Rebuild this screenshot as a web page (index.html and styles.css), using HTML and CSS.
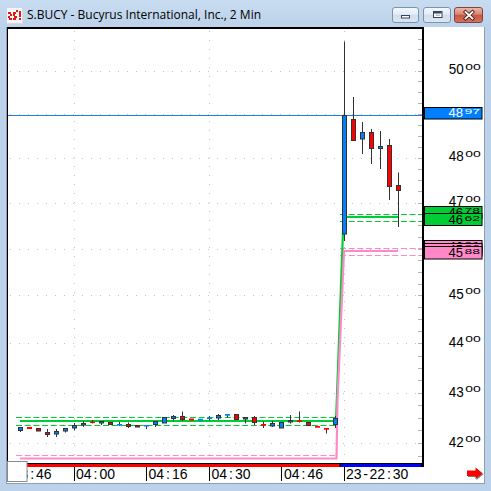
FILE: index.html
```html
<!DOCTYPE html>
<html lang="en">
<head>
<meta charset="utf-8">
<title>S.BUCY - Bucyrus International, Inc., 2 Min</title>
<link rel="stylesheet" href="styles.css">
</head>
<body>
<div class="window">
  <header class="titlebar">
    <svg class="app-icon" width="16" height="16" viewBox="0 0 16 16">
      <rect width="16" height="16" fill="#d9d9d9"/>
      <rect x="0" y="0" width="15" height="15" fill="#f7f7f7"/>
      <g fill="#e01818">
        <rect x="1" y="4" width="3" height="2"/><rect x="3" y="6" width="2" height="2"/><rect x="1" y="8" width="2" height="2"/><rect x="2" y="10" width="3" height="2"/>
        <rect x="6" y="4" width="3" height="2"/><rect x="6" y="6" width="2" height="2"/><rect x="7" y="8" width="3" height="2"/><rect x="6" y="10" width="3" height="2"/><rect x="9" y="2" width="2" height="2"/>
        <rect x="12" y="3" width="2" height="6"/><rect x="12" y="10" width="2" height="2"/>
      </g>
    </svg>
    <span class="title">S.BUCY - Bucyrus International, Inc., 2 Min</span>
    <div class="controls">
      <div class="btn btn-min"><svg width="25" height="14" viewBox="0 0 25 14"><rect x="8.5" y="7.5" width="8" height="2.5" fill="#fff" stroke="#34455a"/></svg></div>
      <div class="btn btn-max"><svg width="26" height="14" viewBox="0 0 26 14"><rect x="9.5" y="3.5" width="8.5" height="6" fill="#fff" stroke="#34455a"/><rect x="10" y="4" width="7.5" height="1.5" fill="#34455a"/><rect x="11.5" y="6.5" width="4.5" height="1.5" fill="#34455a" opacity="0.35"/></svg></div>
      <div class="btn btn-close"><svg width="27" height="14" viewBox="0 0 27 14"><path d="M10.5 4 L17.5 10.5 M17.5 4 L10.5 10.5" stroke="#4d1c16" stroke-width="3.6" stroke-linecap="square"/><path d="M10.5 4 L17.5 10.5 M17.5 4 L10.5 10.5" stroke="#fff" stroke-width="1.8" stroke-linecap="square"/></svg></div>
    </div>
  </header>

  <div class="panel">
    <svg class="plot" width="417" height="456" viewBox="7 27 417 456">
      <!-- grid -->
      <path class="grid" d="M10 71.5H422M10 114.5H422M10 158.5H422M10 203.5H422M10 249.5H422M10 295.5H422M10 343.5H422M10 393.5H422M10 443.5H422"/>
      <path class="grid" d="M74.5 31V463M209.5 31V463M344.5 31V463"/>
      <!-- minor ticks -->
      <path class="ticks" d="M418 39.5h4M418 49.5h4M418 60.5h4M418 71.5h4M418 81.5h4M418 92.5h4M418 103.5h4M418 114.5h4M418 125.5h4M418 136.5h4M418 147.5h4M418 158.5h4M418 169.5h4M418 180.5h4M418 191.5h4M418 203.5h4M418 214.5h4M418 225.5h4M418 237.5h4M418 249.5h4M418 260.5h4M418 272.5h4M418 284.5h4M418 295.5h4M418 307.5h4M418 319.5h4M418 331.5h4M418 343.5h4M418 356.5h4M418 368.5h4M418 380.5h4M418 393.5h4M418 405.5h4M418 418.5h4M418 430.5h4M418 443.5h4M418 456.5h4"/>

      <!-- last price line -->
      <line class="pline" x1="8" y1="115.5" x2="422" y2="115.5"/>

      <!-- green / pink levels -->
      <path class="gdash" d="M16 417.5H338M16 425.5H338M340 214.5H422M340 221.5H422"/>
      <path class="pdash" d="M16 455.5H338M340 248.5H422M340 255.5H422"/>
      <polyline class="gline" points="20,421 336,421 337,395 343.5,217 398,217"/>
      <polyline class="pnline" points="20,458.5 336.5,458.5 337.5,400 344,251 398,251"/>

      <!-- wicks -->
      <path class="wick" d="M20.5 427V432M47.5 429V437M56.5 429V437M65.5 428V432.5M74.5 423V430.5M83.5 421V427M92.5 420V423.5M101.5 421V425M119.5 422V426M128.5 422.5V428M146.5 425V429M155.5 421V427M173.5 415V420.5M182.5 411.5V421M209.5 416V420.5M218.5 414V420M227.5 414V417.5M245.5 417V423.5M254.5 416V425M263.5 421.5V428M272.5 421V427M290.5 415V423.5M299.5 411.5V422.5M326.5 428V433.5M335.5 416V428M344.5 41.5V241M353.5 97V141M362.5 122V154M371.5 129V164M380.5 131V169M389.5 139V200M398.5 172.5V227"/>

      <!-- flat candles (no outline) -->
      <g class="flat-r">
        <rect x="27" y="427" width="5" height="2"/>
        <rect x="90" y="421.5" width="5" height="1.5"/>
        <rect x="189" y="418.5" width="5" height="2"/>
        <rect x="261" y="424" width="5" height="1.7"/>
        <rect x="297" y="420.3" width="5" height="1.7"/>
        <rect x="315" y="426" width="5" height="1.7"/>
        <rect x="324" y="428" width="5" height="1.7"/>
      </g>
      <g class="flat-b">
        <rect x="117" y="424" width="5" height="1.5"/>
        <rect x="144" y="425" width="5" height="1.5"/>
        <rect x="198" y="418.7" width="5" height="2"/>
        <rect x="207" y="417.5" width="5" height="1.5"/>
        <rect x="225" y="414" width="5" height="1.7"/>
      </g>

      <!-- bodies -->
      <g class="up">
        <rect x="18.5" y="427.5" width="4" height="3"/>
        <rect x="54.5" y="431.5" width="4" height="2.5"/>
        <rect x="63.5" y="428.5" width="4" height="2.5"/>
        <rect x="72.5" y="425.5" width="4" height="2.5"/>
        <rect x="81.5" y="423.5" width="4" height="1.5"/>
        <rect x="99.5" y="421.5" width="4" height="1.5"/>
        <rect x="153.5" y="421.5" width="4" height="3"/>
        <rect x="162.5" y="417.5" width="4" height="5.5"/>
        <rect x="171.5" y="416.5" width="4" height="2"/>
        <rect x="216.5" y="415.5" width="4" height="2.5"/>
        <rect x="243.5" y="417.5" width="4" height="1.5"/>
        <rect x="270.5" y="423.5" width="4" height="2.5"/>
        <rect x="279.5" y="422.5" width="4" height="5.5"/>
        <rect x="288.5" y="420.5" width="4" height="1.5"/>
        <rect x="333.5" y="418.5" width="4" height="6"/>
        <rect x="342.5" y="115.5" width="4" height="118.5"/>
        <rect x="360.5" y="132.5" width="4" height="6.5"/>
        <rect x="378.5" y="146.5" width="4" height="2"/>
      </g>
      <g class="down">
        <rect x="36.5" y="428.5" width="4" height="2.5"/>
        <rect x="45.5" y="432.5" width="4" height="2"/>
        <rect x="108.5" y="422.5" width="4" height="2"/>
        <rect x="126.5" y="424.5" width="4" height="2"/>
        <rect x="135.5" y="425.5" width="4" height="1.5"/>
        <rect x="180.5" y="416.5" width="4" height="3"/>
        <rect x="234.5" y="414.5" width="4" height="5"/>
        <rect x="252.5" y="417.5" width="4" height="5"/>
        <rect x="306.5" y="422.5" width="4" height="3"/>
        <rect x="351.5" y="119.5" width="4" height="21"/>
        <rect x="369.5" y="132.5" width="4" height="16"/>
        <rect x="387.5" y="145.5" width="4" height="41"/>
        <rect x="396.5" y="185.5" width="4" height="5"/>
      </g>

      <!-- frame -->
      <rect class="ink" x="7" y="27" width="417" height="2"/>
      <rect class="ink" x="7" y="27" width="1" height="437"/>
      <rect class="ink" x="422" y="27" width="2" height="440"/>
      <rect class="ink" x="8" y="463" width="415" height="4"/>
      <rect class="bar-r" x="8" y="464" width="331.5" height="3"/>
      <rect class="bar-b" x="341" y="464" width="80" height="3"/>

      <!-- time axis -->
      <path class="tick" d="M74.5 467V481M146.5 467V481M209.5 467V481M281.5 467V481M344.5 467V481"/>
      <text class="tlbl" x="12.6 20.4 30.15 36 43.8" y="479.3">03:46</text>
      <text class="tlbl" x="76 83.8 93.55 99.4 107.2" y="479.3">04:00</text>
      <text class="tlbl" x="148.5 156.3 166.05 171.9 179.7" y="479.3">04:16</text>
      <text class="tlbl" x="211.5 219.3 229.05 234.9 242.7" y="479.3">04:30</text>
      <text class="tlbl" x="284 291.8 301.55 307.4 315.2" y="479.3">04:46</text>
      <text class="tlbl" x="346 353.8 363.17 369.4 377.2 386.95 392.8 400.6" y="479.3">23-22:30</text>

      <!-- corner box -->
      <rect class="corner" x="7.5" y="461.5" width="19.5" height="20"/>
    </svg>

    <svg class="axis" width="60" height="456" viewBox="424 27 60 456">
      <text class="big" x="448.8" y="74" textLength="15" lengthAdjust="spacingAndGlyphs">50</text><text class="sm" x="465.3" y="69.6" textLength="15.5" lengthAdjust="spacingAndGlyphs">00</text>
      <text class="big" x="448.8" y="161" textLength="15" lengthAdjust="spacingAndGlyphs">48</text><text class="sm" x="465.3" y="156.6" textLength="15.5" lengthAdjust="spacingAndGlyphs">00</text>
      <text class="big" x="448.8" y="206" textLength="15" lengthAdjust="spacingAndGlyphs">47</text><text class="sm" x="465.3" y="201.6" textLength="15.5" lengthAdjust="spacingAndGlyphs">00</text>
      <text class="big" x="448.8" y="298.5" textLength="15" lengthAdjust="spacingAndGlyphs">45</text><text class="sm" x="465.3" y="294.1" textLength="15.5" lengthAdjust="spacingAndGlyphs">00</text>
      <text class="big" x="448.8" y="346.5" textLength="15" lengthAdjust="spacingAndGlyphs">44</text><text class="sm" x="465.3" y="342.1" textLength="15.5" lengthAdjust="spacingAndGlyphs">00</text>
      <text class="big" x="448.8" y="396.5" textLength="15" lengthAdjust="spacingAndGlyphs">43</text><text class="sm" x="465.3" y="392.1" textLength="15.5" lengthAdjust="spacingAndGlyphs">00</text>
      <text class="big" x="448.8" y="446.5" textLength="15" lengthAdjust="spacingAndGlyphs">42</text><text class="sm" x="465.3" y="442.1" textLength="15.5" lengthAdjust="spacingAndGlyphs">00</text>

      <!-- last price tag -->
      <rect class="tag-blue" x="424.5" y="107.5" width="57.5" height="11.5"/>
      <text class="tbig white" x="448.5" y="117.4" textLength="14.5" lengthAdjust="spacingAndGlyphs">48</text><text class="tsm white" x="464.5" y="114" textLength="15.5" lengthAdjust="spacingAndGlyphs">97</text>

      <!-- green tags -->
      <rect class="tag-green" x="424.5" y="206.5" width="57.5" height="12"/>
      <text class="tbig" x="448.5" y="216.6" textLength="14.5" lengthAdjust="spacingAndGlyphs">46</text><text class="tsm" x="464.5" y="213" textLength="15.5" lengthAdjust="spacingAndGlyphs">78</text>
      <rect class="tag-green" x="424.5" y="213.5" width="57.5" height="12"/>
      <text class="tbig" x="448.5" y="224.2" textLength="14.5" lengthAdjust="spacingAndGlyphs">46</text><text class="tsm" x="464.5" y="220.6" textLength="15.5" lengthAdjust="spacingAndGlyphs">62</text>

      <!-- pink tags -->
      <rect class="tag-pink" x="424.5" y="240.5" width="57.5" height="12.5"/>
      <text class="tbig" x="448.5" y="250.8" textLength="14.5" lengthAdjust="spacingAndGlyphs">46</text><text class="tsm" x="464.5" y="247.2" textLength="15.5" lengthAdjust="spacingAndGlyphs">01</text>
      <rect class="tag-pink" x="424.5" y="243.5" width="57.5" height="12.5"/>
      <text class="tbig" x="448.5" y="253.8" textLength="14.5" lengthAdjust="spacingAndGlyphs">45</text><text class="tsm" x="464.5" y="250.2" textLength="15.5" lengthAdjust="spacingAndGlyphs">96</text>
      <rect class="tag-pink" x="424.5" y="246.5" width="57.5" height="12.5"/>
      <text class="tbig" x="448.5" y="257.4" textLength="14.5" lengthAdjust="spacingAndGlyphs">45</text><text class="tsm" x="464.5" y="253.8" textLength="15.5" lengthAdjust="spacingAndGlyphs">88</text>

      <!-- scroll arrow -->
      <path class="arrow-sh" d="M468 471.5H476.5V468.5L483.5 474.3L476.5 480V477H468Z"/>
      <path class="arrow" d="M467 470.5H475.5V467.5L482.5 473.3L475.5 479V476H467Z"/>
    </svg>
  </div>
</div>
</body>
</html>
```

FILE: styles.css
```css
* { box-sizing: border-box; }
html, body { margin: 0; padding: 0; }
body { width: 491px; height: 491px; overflow: hidden; background: #bcd2ea; }

.window {
  width: 491px;
  height: 491px;
  display: flex;
  flex-direction: column;
  background: #bcd2ea;
}

.titlebar {
  height: 27px;
  flex: none;
  display: flex;
  align-items: flex-start;
  padding: 7px 8px 0 7px;
  background: linear-gradient(#c8dcf1, #bcd2ea);
}
.app-icon { display: block; flex: none; margin-top: 1px; }
.title {
  margin-left: 4px;
  font: 12px/16px "Open Sans", "Liberation Sans", sans-serif;
  color: #000;
  white-space: nowrap;
}
.controls { margin-left: auto; display: flex; }
.btn {
  height: 16px;
  border: 1px solid #7d93ab;
  border-radius: 3px;
  background: linear-gradient(#f3f7fc 0%, #e4ecf6 45%, #d0ddec 50%, #dde7f3 100%);
}
.btn svg { display: block; }
.btn-min { width: 27px; }
.btn-max { width: 28px; margin-left: 4px; }
.btn-close {
  width: 29px;
  margin-left: 3px;
  border-color: #83443c;
  background: linear-gradient(#ebb6ab 0%, #da8676 45%, #c9543f 50%, #d3725f 100%);
}

.panel {
  margin-left: 6px;
  width: 479px;
  height: 457px;
  flex: none;
  display: flex;
  background: #fff;
  border: 1px solid #8e9fb3;
  border-top: 0;
}
.plot, .axis { display: block; flex: none; }

.grid { fill: none; stroke: #c4c4c4; stroke-width: 1; stroke-dasharray: 1 8; }
.ticks { fill: none; stroke: #b4b4b4; stroke-width: 1; }
.pline { stroke: #1a7fe6; stroke-width: 1; }
.gdash { fill: none; stroke: #00cc33; stroke-width: 1.2; stroke-dasharray: 6 2.7; }
.pdash { fill: none; stroke: #ff88c8; stroke-width: 1.2; stroke-dasharray: 6 2.7; }
.gline { fill: none; stroke: #00cc33; stroke-width: 2.2; }
.pnline { fill: none; stroke: #ff88c8; stroke-width: 2.2; }
.wick { fill: none; stroke: #333; stroke-width: 1; }
.flat-r rect { fill: #ff0000; }
.flat-b rect { fill: #0080ff; }
.up rect { fill: #0080ff; stroke: #333; stroke-width: 1; }
.down rect { fill: #ff0000; stroke: #333; stroke-width: 1; }
.ink { fill: #000; }
.bar-r { fill: #ff0000; }
.bar-b { fill: #0000ff; }
.tick { stroke: #000; stroke-width: 1; }
.tlbl { font-family: "Liberation Sans", Arial, sans-serif; font-size: 14px; fill: #000; }
.corner { fill: #fff; stroke: #8a8a8a; stroke-width: 1; }

.big { font-family: "Liberation Sans", Arial, sans-serif; font-size: 14px; fill: #000; }
.sm { font-family: "Liberation Sans", Arial, sans-serif; font-size: 8.5px; fill: #000; }
.tbig { font-family: "Liberation Sans", Arial, sans-serif; font-size: 12px; fill: #000; }
.tsm { font-family: "Liberation Sans", Arial, sans-serif; font-size: 8px; fill: #000; }
.white { fill: #fff; }
.tag-blue { fill: #0080ff; stroke: #000; stroke-width: 1; }
.tag-green { fill: #00cc33; stroke: #000; stroke-width: 1; }
.tag-pink { fill: #ff88c8; stroke: #000; stroke-width: 1; }
.arrow-sh { fill: #7a7a7a; }
.arrow { fill: #ff0000; }
```
